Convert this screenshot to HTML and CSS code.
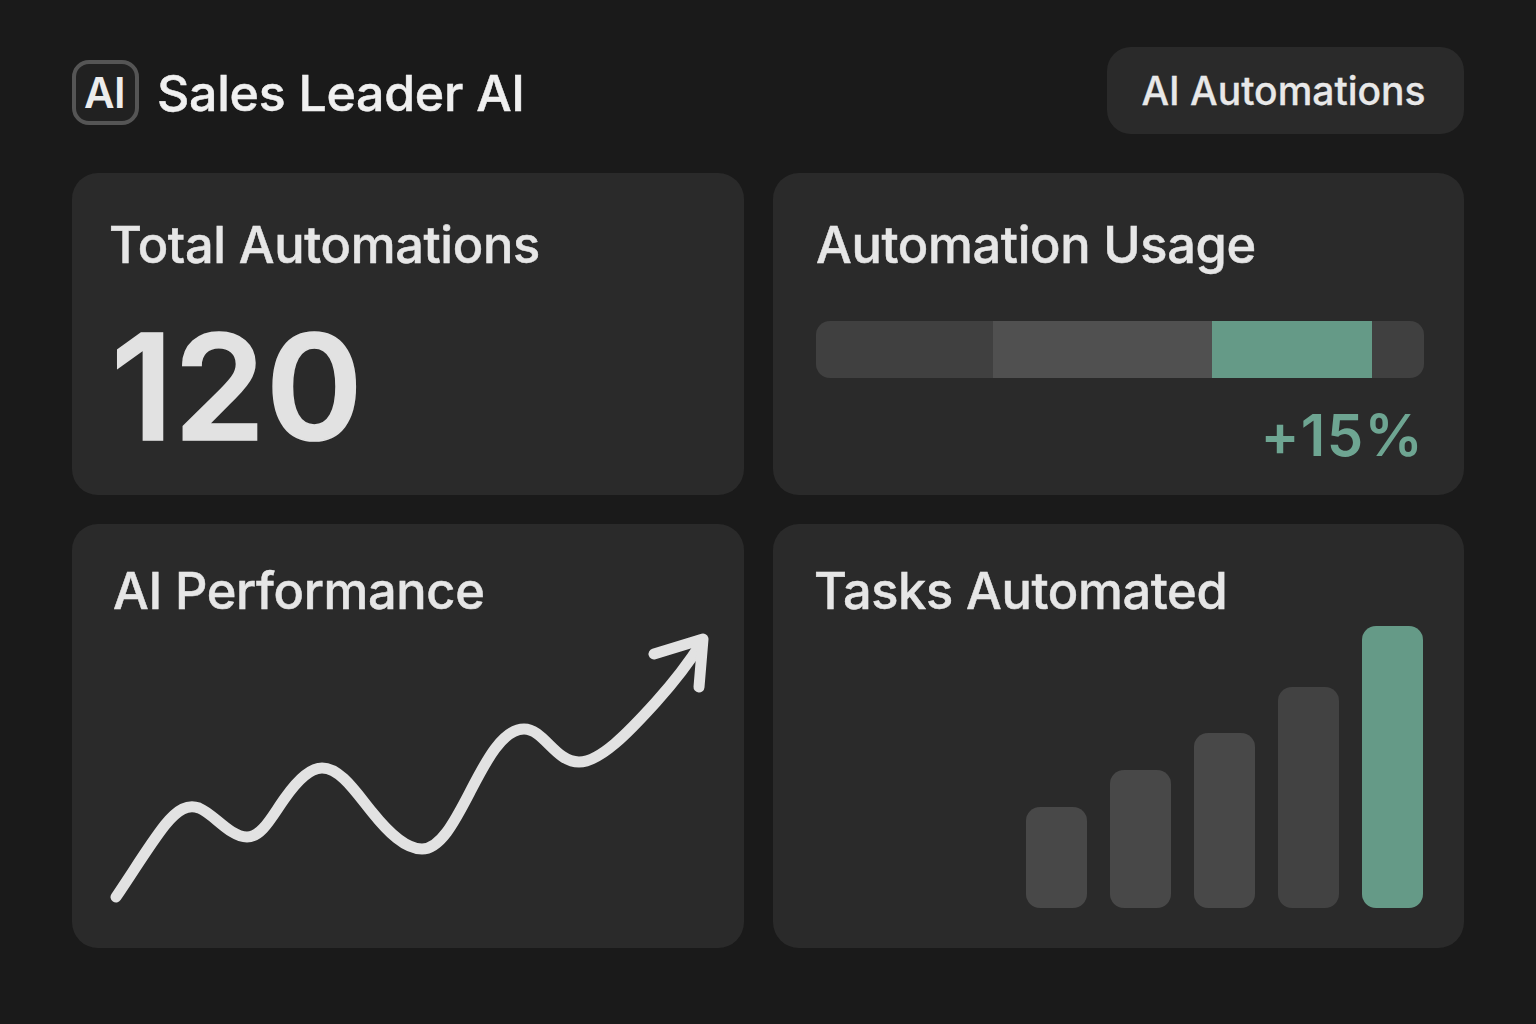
FILE: index.html
```html
<!DOCTYPE html>
<html lang="en">
<head>
<meta charset="utf-8">
<title>Sales Leader AI</title>
<link rel="stylesheet" href="styles.css">
</head>
<body>
<main class="page">
  <header class="topbar">
    <div class="brand">
      <span class="logo">AI</span>
      <h1 class="brand-name">Sales Leader AI</h1>
    </div>
    <button class="pill">AI Automations</button>
  </header>
  <section class="grid">
    <article class="card card-total">
      <h2 class="card-title">Total Automations</h2>
      <p class="big-number">120</p>
    </article>
    <article class="card card-usage">
      <h2 class="card-title">Automation Usage</h2>
      <div class="progress">
        <span class="seg seg-a"></span>
        <span class="seg seg-b"></span>
        <span class="seg seg-c"></span>
      </div>
      <p class="delta">+15%</p>
    </article>
    <article class="card card-perf">
      <h2 class="card-title">AI Performance</h2>
      <svg class="line-chart" width="600" height="275" viewBox="110 630 600 275" aria-hidden="true">
        <path class="line" d="M116 896 C135 868 150 843 165 824 C178 808 188 803 199 807 C214 813 230 836 247 836 C262 836 272 815 285 797 C297 780 310 767 322 767 C340 767 355 790 372 811 C388 831 405 848 422 848 C440 848 454 822 470 791 C485 762 502 728 524 728 C544 728 555 761 579 761 C600 761 628 732 656 701 C674 681 690 660 702 641"/>
        <path class="line" d="M654 653 L703 638 L699 686"/>
      </svg>
    </article>
    <article class="card card-tasks">
      <h2 class="card-title">Tasks Automated</h2>
      <div class="bars">
        <span class="bar" style="height:101px"></span>
        <span class="bar" style="height:138px"></span>
        <span class="bar" style="height:175px"></span>
        <span class="bar bar-dim" style="height:221px"></span>
        <span class="bar bar-accent" style="height:282px"></span>
      </div>
    </article>
  </section>
</main>
</body>
</html>
```
FILE: styles.css
```css
* { box-sizing: border-box; }
html, body { margin: 0; height: 100%; }
body {
  background: #1a1a1a;
  color: #e6e6e6;
  font-family: "Inter", "Liberation Sans", sans-serif;
}
.page { width: 1536px; height: 1024px; padding: 47px 72px 0; }
.topbar { display: flex; justify-content: space-between; align-items: center; height: 87px; }
.brand { display: flex; align-items: center; gap: 18px; margin-top: 4px; }
.logo {
  width: 67px; height: 65px; display: flex; align-items: center; justify-content: center;
  padding-right: 2px;
  border: 4px solid #555; border-radius: 17px; background: #212121;
  font-size: 42px; font-weight: 600; color: #ececec; letter-spacing: -0.5px;
}
.brand-name { margin: 0; font-size: 50px; font-weight: 500; color: #f0f0f0; letter-spacing: -0.25px; -webkit-text-stroke: 0.5px #f0f0f0; }
.pill {
  width: 357px; height: 87px; padding: 0 4px 0 0; border: 0; border-radius: 24px; background: #2a2a2a;
  color: #e8e8e8; font: 500 39px "Inter", "Liberation Sans", sans-serif; -webkit-text-stroke: 0.3px #e8e8e8;
}
.grid {
  display: grid; grid-template-columns: 672px 691px; grid-template-rows: 322px 424px;
  gap: 29px; margin-top: 39px;
}
.card { background: #2a2a2a; border-radius: 26px; display: flex; flex-direction: column; }
.card-title { margin: 0; font-size: 50.5px; font-weight: 500; line-height: 60px; color: #e6e6e6; letter-spacing: -0.35px; -webkit-text-stroke: 0.5px #e6e6e6; }
.card-total { padding: 42px 37px 0; }
.big-number { margin: 27px 0 0 2px; font-size: 147px; font-weight: 600; line-height: 170px; color: #e2e2e2; letter-spacing: 0.5px; -webkit-text-stroke: 1.5px #e2e2e2; }
.card-usage { padding: 42px 40px 0 43px; }
.progress { display: flex; height: 57px; margin-top: 46px; border-radius: 14px; overflow: hidden; background: #404040; }
.seg { display: block; height: 100%; }
.seg-a { width: 177px; }
.seg-b { width: 219px; background: #505050; }
.seg-c { width: 160px; background: #659a87; }
.delta { margin: 24px 0 0 0; text-align: right; font-size: 58px; font-weight: 600; line-height: 66px; color: #6ea592; letter-spacing: 1.3px; }
.card-perf { padding: 37px 0 0 41px; }
.line-chart { display: block; margin: 10px 0 0 -3px; }
.line { fill: none; stroke: #e2e2e2; stroke-width: 11; stroke-linecap: round; stroke-linejoin: round; }
.card-tasks { padding: 37px 41px 40px 41px; }
.bars { flex: 1; display: flex; justify-content: flex-end; align-items: flex-end; gap: 23px; }
.bar { width: 61px; background: #484848; border-radius: 14px; }
.bar-dim { background: #424242; }
.bar-accent { background: #659a87; }
```
